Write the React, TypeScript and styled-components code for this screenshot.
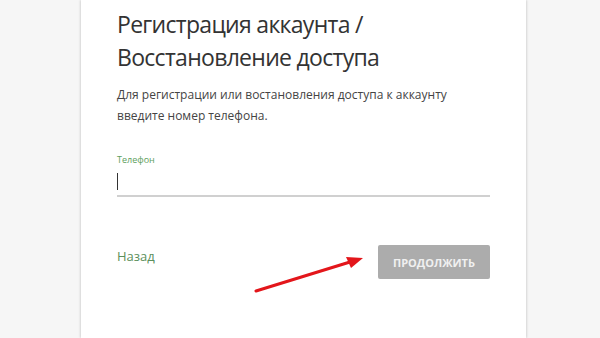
import React from "react";
import styled, { createGlobalStyle } from "styled-components";

const Global = createGlobalStyle`
  html, body { margin: 0; padding: 0; background: #f6f6f6; }
  body { font-family: "Open Sans", "Noto Sans", sans-serif; overflow: hidden; }
`;

const Page = styled.div`
  position: relative;
  width: 600px;
  height: 338px;
  overflow: hidden;
  background: #f6f6f6;
`;

const Card = styled.div`
  margin-left: 81px;
  width: 445px;
  height: 338px;
  box-sizing: border-box;
  background: #fff;
  box-shadow: -1px 0 2px rgba(0,0,0,0.12), 1px 0 2px rgba(0,0,0,0.12);
  padding: 8px 36px 0 36px;
  display: flex;
  flex-direction: column;
`;

const Title = styled.h1`
  margin: 0;
  font-size: 23px;
  line-height: 33px;
  font-weight: 400;
  letter-spacing: -0.7px;
  color: #333;
`;

const Text = styled.p`
  margin: 10px 0 0;
  font-size: 12px;
  line-height: 21px;
  color: #444;
`;

const Field = styled.div`
  margin-top: 28px;
  display: flex;
  flex-direction: column;
`;

const Label = styled.label`
  font-size: 9px;
  line-height: 12px;
  color: #5c9e5c;
`;

const InputLine = styled.div`
  height: 29px;
  box-sizing: content-box;
  border-bottom: 2px solid #d0d0d0;
  display: flex;
  align-items: flex-end;
`;

const Caret = styled.span`
  width: 1px;
  height: 17px;
  margin-bottom: 5px;
  background: #333;
`;

const Actions = styled.div`
  margin-top: 48px;
  display: flex;
  justify-content: space-between;
  align-items: flex-start;
`;

const Back = styled.a`
  font-size: 13px;
  line-height: 16px;
  color: #5b8f5b;
  margin-top: 3px;
`;

const Button = styled.button`
  width: 112px;
  height: 34px;
  border: none;
  border-radius: 2px;
  background: #acacac;
  color: #f0f0f0;
  font-family: "Open Sans", "Noto Sans", sans-serif;
  font-weight: 700;
  font-size: 11px;
  padding: 0;
`;

const Arrow = styled.svg`
  position: absolute;
  left: 0;
  top: 0;
  pointer-events: none;
`;

export default function App() {
  return (
    <Page>
      <Global />
      <Card>
        <Title>
          Регистрация аккаунта /<br />Восстановление доступа
        </Title>
        <Text>
          Для регистрации или востановления доступа к аккаунту<br />введите номер телефона.
        </Text>
        <Field>
          <Label>Телефон</Label>
          <InputLine>
            <Caret />
          </InputLine>
        </Field>
        <Actions>
          <Back>Назад</Back>
          <Button>ПРОДОЛЖИТЬ</Button>
        </Actions>
      </Card>
      <Arrow width="600" height="338" viewBox="0 0 600 338">
        <line x1="256" y1="291" x2="350" y2="262" stroke="#e3161b" strokeWidth="3" strokeLinecap="round" />
        <polygon points="363,258 346,257 351,268" fill="#e3161b" />
      </Arrow>
    </Page>
  );
}
